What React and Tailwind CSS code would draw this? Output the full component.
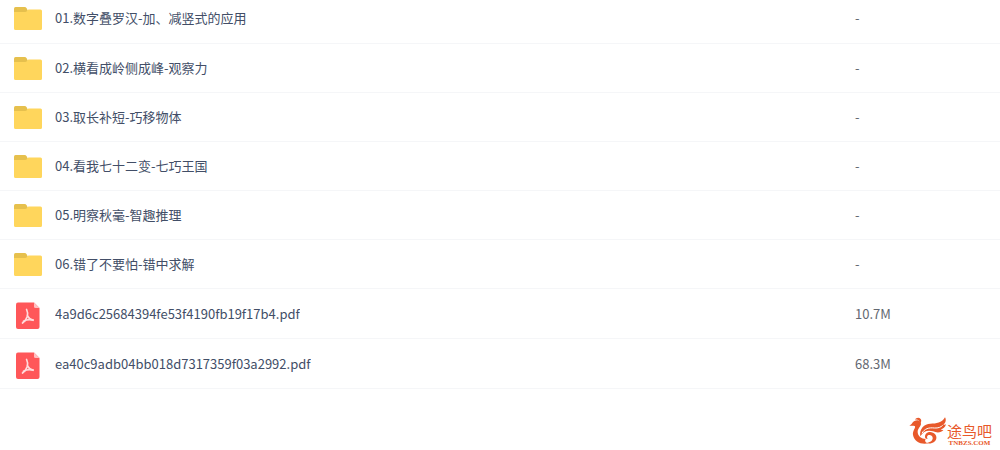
const folders = [
  '01.数字叠罗汉-加、减竖式的应用',
  '02.横看成岭侧成峰-观察力',
  '03.取长补短-巧移物体',
  '04.看我七十二变-七巧王国',
  '05.明察秋毫-智趣推理',
  '06.错了不要怕-错中求解',
];

const items = [
  ...folders.map((name) => ({ name, type: 'folder', size: '-' })),
  { name: '4a9d6c25684394fe53f4190fb19f17b4.pdf', type: 'pdf', size: '10.7M' },
  { name: 'ea40c9adb04bb018d7317359f03a2992.pdf', type: 'pdf', size: '68.3M' },
];

function FolderIcon() {
  return (
    <svg viewBox="0 0 28 28" className="w-7 h-7 shrink-0" aria-hidden="true">
      <path d="M0 10V4.500Q0 3 1.500 3H10.500Q12 3 12.600 4.200L14 7V10Z" fill="#e6c04d" />
      <path d="M0 8H11Q12.500 8 13.200 6.700T15 5.500H26.500Q28 5.500 28 7V24.500Q28 26 26.500 26H1.500Q0 26 0 24.500Z" fill="#ffd65c" />
    </svg>
  );
}

function PdfIcon() {
  return (
    <svg viewBox="0 -2 28 30" className="w-7 h-[30px] shrink-0" aria-hidden="true">
      <path d="M4 1.500H20L25.500 7V26Q25.500 28 23.500 28H4Q2 28 2 26V3.500Q2 1.500 4 1.500Z" fill="#ff5759" />
      <path d="M20 1.500L25.500 7H21.500Q20 7 20 5.500Z" fill="#ffc0c1" />
      <g fill="none" stroke="#ffdcdc" strokeWidth="1.700" strokeLinecap="round" strokeLinejoin="round">
        <path d="M12.600 8.500Q14.300 12 13.300 15.500Q12 19.500 8.500 22" />
        <path d="M13.500 15Q15.200 18.300 19 19.300" />
        <path d="M9.500 20.200Q13 18 19 18.800" />
      </g>
    </svg>
  );
}

function BirdLogo() {
  return (
    <svg viewBox="0 0 114 84" className="w-[38px] h-7" aria-hidden="true">
      <g fill="#e8592b">
        {/* head and body */}
        <path d="M0 26C8 24 10 14 18 11C26 7 36 11 36 20C36 28 27 33 26 43C25 58 38 66 50 66C46 72 50 77 58 79C36 84 16 74 12 54C10 42 20 34 18 28C16 24 8 28 0 26Z" />
        <path d="M18 8C22 1 30 0 35 6C38 10 37 15 34 18C32 10 26 6 18 8Z" />
        {/* wing */}
        <path d="M34 58C30 36 46 20 64 20C82 20 98 18 108 1C113 10 109 19 103 23C107 24 109 23 111 22C109 31 102 36 95 37C99 39 102 39 104 38C96 48 84 48 72 43C58 38 42 42 34 58Z" />
        {/* curl */}
        <path d="M48 60C48 48 60 42 72 47C84 52 86 66 76 74C70 79 60 81 52 78C64 76 72 70 71 62C70 54 62 52 57 55C54 57 53 62 56 66C50 66 48 64 48 60Z" />
      </g>
      <path d="M39 49C46 35 60 31 76 33C88 34 96 30 101 25" fill="none" stroke="#fff" strokeWidth="3" />
    </svg>
  );
}

export default function App() {
  return (
    <div className="min-h-screen flex flex-col overflow-hidden bg-white font-['Noto_Sans_CJK_SC',sans-serif] text-[13px] leading-5">
      <table className="-mt-1.5 w-full table-fixed border-collapse">
        <tbody>
          {items.map((item) => (
            <tr
              key={item.name}
              className={`border-b border-[#f5f6f8] ${item.type === 'pdf' ? 'h-[50px]' : 'h-[49px]'}`}
            >
              <td className={item.type === 'pdf' ? 'pl-3.5 pt-0.5' : 'pl-3.5'}>
                <a href="#" className="flex items-center gap-[13px] text-[#424e67]">
                  {item.type === 'pdf' ? <PdfIcon /> : <FolderIcon />}
                  <span className="truncate">{item.name}</span>
                </a>
              </td>
              <td className={`w-[145px] text-[#636871] ${item.type === 'pdf' ? 'pt-0.5' : ''}`}>{item.size}</td>
            </tr>
          ))}
        </tbody>
      </table>

      <footer className="mt-auto flex items-start justify-end pr-2 pb-[3px] text-[#e8592b]">
        <BirdLogo />
        <div className="flex flex-col items-center pt-1.5">
          <span className="text-[15px] leading-[15px]">途鸟吧</span>
          <span className="pt-px font-['Liberation_Serif',serif] text-[7px] leading-2 font-bold">TNBZS.COM</span>
        </div>
      </footer>
    </div>
  );
}
